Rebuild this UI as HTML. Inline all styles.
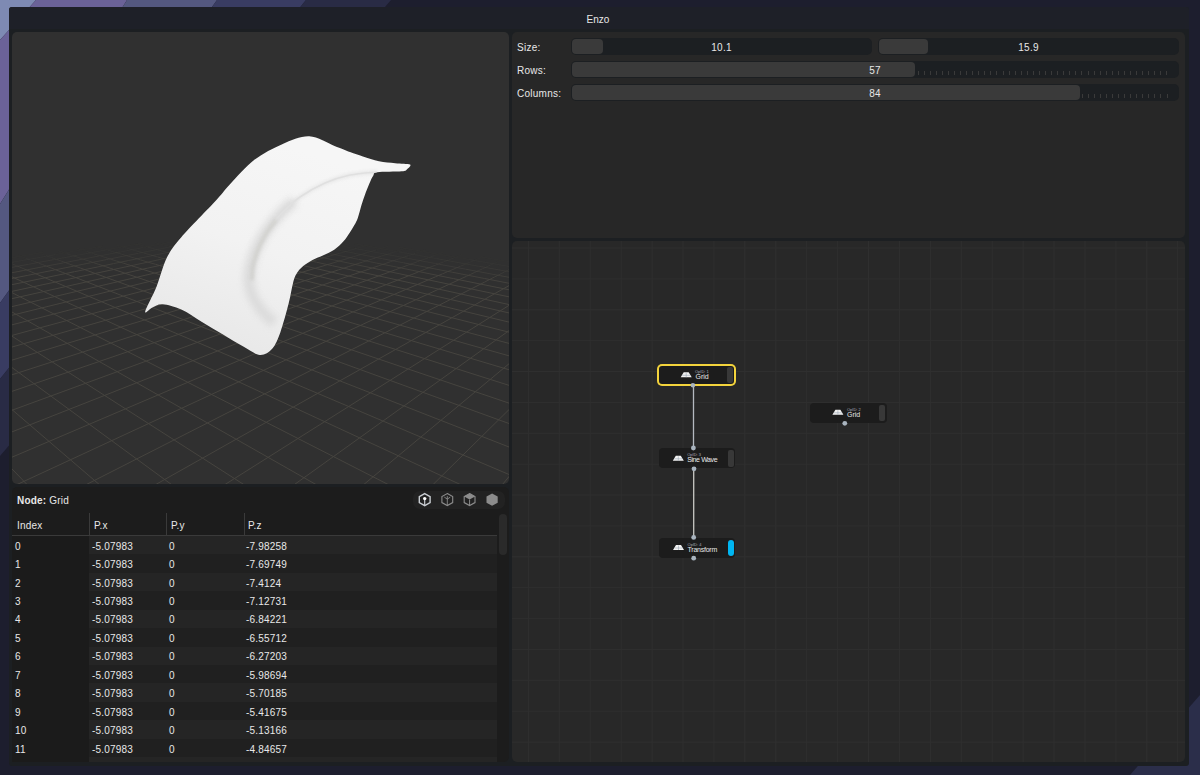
<!DOCTYPE html>
<html><head><meta charset="utf-8"><style>
*{margin:0;padding:0;box-sizing:border-box}
html,body{width:1200px;height:775px;overflow:hidden;background:#1c1d2d;font-family:"Liberation Sans",sans-serif;color:#e6e6e6}
.abs{position:absolute}
#bg{position:absolute;left:0;top:0;width:1200px;height:775px}
#win{position:absolute;left:9px;top:7px;width:1180px;height:759px;background:#1c1f22;border-radius:3px}
#tbar{position:absolute;left:9px;top:7px;width:1180px;height:21.5px;background:#1e2028;border-radius:3px 3px 0 0}
#title{position:absolute;left:0;top:14px;width:1196px;text-align:center;font-size:10px;color:#e8e8e8}
.panel{position:absolute;border-radius:5px;overflow:hidden}
#vp{left:12px;top:32px;width:497px;height:452px;background:#303030}
#tbl{left:12px;top:487px;width:497px;height:275px;background:#1c1c1c}
#par{left:512px;top:32px;width:673px;height:206px;background:#272727}
#ned{left:512px;top:241px;width:673px;height:521px;background:#282828}
.t{position:absolute;font-size:10px;line-height:12px;color:#e8e8e8;white-space:nowrap;letter-spacing:0.2px}
.row{position:absolute;left:89px;width:408px;height:18.47px}
.lbl{position:absolute;font-size:10px;line-height:12px;color:#e8e8e8;letter-spacing:0.25px}
.inp{position:absolute;height:17px;background:#1c1f22;border-radius:5px}
.thumb{position:absolute;left:1px;top:1px;height:15px;background:#3a3a3a;border-radius:4px}
.val{position:absolute;left:0;top:4px;width:100%;text-align:center;font-size:10px;line-height:12px;color:#e8e8e8;letter-spacing:0.3px}
.tick{position:absolute;width:1px;height:4px;background:#3a3a3a}
.node{position:absolute;background:#1c1c1c;border-radius:4px}
.flag{position:absolute;border-radius:2px;background:#383838}
.dot{position:absolute;width:5px;height:5px;border-radius:50%;background:#a9b0b8}
.op{position:absolute;font-size:4px;line-height:5px;color:#aab}
.nm{position:absolute;font-size:7px;line-height:8px;color:#e8e8e8;white-space:nowrap}
</style></head><body>
<svg id="bg" viewBox="0 0 1200 775">
<defs><linearGradient id="g1" x1="0" y1="0" x2="1" y2="0.6">
<stop offset="0" stop-color="#7b86b0"/><stop offset="0.08" stop-color="#6c6399"/><stop offset="0.2" stop-color="#575a84"/><stop offset="0.36" stop-color="#3b3e63"/><stop offset="0.55" stop-color="#23253a"/><stop offset="1" stop-color="#1c1d2d"/></linearGradient></defs>
<rect width="1200" height="775" fill="#1d1e2e"/>
<polygon points="0,0 36,0 0,40" fill="#7e8ab3"/>
<polygon points="36,0 127,0 0,204 0,40" fill="#6b6298"/>
<polygon points="127,0 217,0 0,303 0,204" fill="#545880"/>
<polygon points="217,0 306,0 0,379 0,303" fill="#393c62"/>
<polygon points="306,0 391,0 0,456 0,379" fill="#292b45"/>
<polygon points="1130,775 1200,775 1200,695" fill="#2b2e4a"/>
</svg>
<div id="win"></div><div id="tbar"></div>
<div id="title">Enzo</div>

<div id="vp" class="panel">
<svg width="497" height="452" viewBox="12 32 497 452" style="position:absolute;left:0;top:0">
<defs><linearGradient id="fade" x1="0" y1="32" x2="0" y2="484" gradientUnits="userSpaceOnUse">
<stop offset="0.43" stop-color="#fff" stop-opacity="0"/><stop offset="0.56" stop-color="#fff" stop-opacity="0.8"/><stop offset="0.75" stop-color="#fff" stop-opacity="1"/></linearGradient>
<mask id="fm"><rect x="0" y="0" width="1200" height="775" fill="url(#fade)"/></mask>
<linearGradient id="clg" x1="300" y1="150" x2="230" y2="350" gradientUnits="userSpaceOnUse"><stop offset="0" stop-color="#f6f6f6"/><stop offset="0.5" stop-color="#f2f2f2"/><stop offset="1" stop-color="#e8e8e8"/></linearGradient><clipPath id="cc"><path d="M309.2 136.3C317.9 136.6 327.7 143.3 334.5 145.9C341.3 148.5 345.3 150.2 350.0 152.0C354.7 153.8 358.1 154.9 362.9 156.5C367.7 158.1 373.6 160.2 379.0 161.3C384.4 162.4 390.0 162.6 395.2 163.2C400.4 163.8 408.1 163.6 410.0 164.6C411.9 165.6 408.2 168.3 406.8 169.4C405.4 170.5 406.6 170.8 401.6 171.3C396.7 171.8 381.8 171.6 377.1 172.3C372.4 173.1 374.5 173.9 373.2 175.8C371.9 177.7 370.8 180.3 369.4 183.5C368.0 186.7 366.1 191.6 364.8 195.2C363.5 198.8 362.7 201.2 361.5 205.0C360.3 208.8 359.0 214.6 357.8 217.9C356.6 221.2 355.8 222.5 354.4 225.0C353.0 227.5 351.5 230.0 349.7 232.7C347.9 235.4 346.1 238.5 343.5 241.3C340.9 244.2 337.6 247.5 334.2 249.8C330.8 252.1 327.0 253.5 323.4 255.2C319.8 256.9 315.9 258.1 312.5 259.9C309.1 261.7 305.8 263.8 303.2 266.0C300.6 268.2 298.7 270.3 297.0 273.0C295.3 275.7 294.6 277.2 293.2 282.3C291.8 287.4 290.8 295.0 288.7 303.3C286.6 311.6 283.1 324.6 280.4 332.2C277.6 339.8 275.6 344.9 272.2 348.7C268.8 352.5 264.6 355.2 259.8 354.9C255.0 354.5 249.5 350.1 243.3 346.6C237.1 343.2 229.5 338.3 222.6 334.2C215.7 330.1 208.9 326.0 202.0 321.9C195.1 317.8 187.9 312.4 181.3 309.5C174.8 306.6 167.5 304.7 162.7 304.3C157.9 303.9 155.3 306.2 152.4 307.4C149.5 308.6 144.5 314.9 145.2 311.5C145.9 308.1 152.9 295.6 156.5 286.7C160.1 277.8 162.7 266.1 166.8 257.8C170.9 249.6 173.0 246.8 181.3 237.2C189.6 227.6 208.3 208.8 216.4 200.0C224.5 191.2 223.7 190.9 230.0 184.2C236.3 177.5 245.7 166.5 254.4 159.8C263.1 153.1 273.1 148.1 282.2 144.2C291.3 140.3 300.5 136.0 309.2 136.3Z"/></clipPath>
<filter id="bl" x="-50%" y="-50%" width="200%" height="200%"><feGaussianBlur stdDeviation="4"/></filter><filter id="bl2" x="-50%" y="-50%" width="200%" height="200%"><feGaussianBlur stdDeviation="3"/></filter><filter id="bl3" x="-50%" y="-50%" width="200%" height="200%"><feGaussianBlur stdDeviation="1.5"/></filter>
</defs>
<g stroke="#46443f" stroke-width="1" fill="none"><path d="M-20.2 263.3L43.7 252.2M55.0 254.7L102.7 246.1M105.7 250.0L141.7 243.3M143.3 247.5L173.6 241.7M174.9 246.0L201.3 240.7M202.7 245.2L226.6 240.2M228.1 244.8L249.4 240.2M251.8 244.8L271.4 240.3M274.2 245.0L292.0 240.8M295.7 245.5L312.1 241.5M316.3 246.3L331.5 242.4M336.5 247.3L350.5 243.5M356.3 248.5L369.2 244.8M376.2 249.9L388.0 246.3M395.5 251.5L406.4 248.0M415.1 253.3L425.1 249.9M434.7 255.4L444.0 252.0M454.6 257.6L462.7 254.4M474.6 260.2L481.9 257.1M494.9 263.0L501.7 259.9M515.9 266.2L521.8 263.1M537.3 269.7L540.0 268.1M-20.1 262.0L-16.4 263.7M-1.2 258.2L4.9 260.8M18.8 255.4L25.7 258.1M38.5 252.8L46.2 255.6M58.0 250.6L66.6 253.5M77.2 248.5L87.0 251.6M96.4 246.7L107.1 249.9M115.6 245.1L127.6 248.5M135.0 243.7L148.0 247.2M154.6 242.5L169.1 246.2M174.8 241.6L190.9 245.5M195.5 240.8L213.3 244.9M216.9 240.3L236.9 244.7M239.7 240.2L262.2 244.9M264.0 240.3L289.2 245.4M290.1 240.8L319.6 246.5M319.8 241.9L354.5 248.4M354.3 243.8L398.8 251.8M398.5 247.2L469.1 259.5M480.1 256.7L539.6 266.8" stroke-opacity="0.10"/><path d="M14.9 261.8L55.0 254.7M77.7 255.2L105.7 250.0M120.6 251.9L143.3 247.5M155.5 249.9L174.9 246.0M185.2 248.8L202.7 245.2M212.7 248.1L228.1 244.8M237.8 247.9L251.8 244.8M261.3 248.1L274.2 245.0M283.6 248.5L295.7 245.5M305.3 249.2L316.3 246.3M326.6 250.0L336.5 247.3M347.1 251.2L356.3 248.5M367.6 252.5L376.2 249.9M387.9 254.0L395.5 251.5M408.1 255.7L415.1 253.3M428.2 257.8L434.7 255.4M448.7 260.0L454.6 257.6M469.2 262.5L474.6 260.2M490.0 265.3L494.9 263.0M511.4 268.4L515.9 266.2M533.5 271.8L537.3 269.7M-16.4 263.7L-12.7 265.5M4.9 260.8L9.1 262.6M25.7 258.1L30.6 260.0M46.2 255.6L51.9 257.7M66.6 253.5L72.8 255.6M87.0 251.6L93.7 253.8M107.1 249.9L114.7 252.2M127.6 248.5L136.2 250.9M148.0 247.2L157.6 249.8M169.1 246.2L179.8 248.9M190.9 245.5L202.8 248.3M213.3 244.9L226.3 247.9M236.9 244.7L251.8 248.0M262.2 244.9L278.6 248.3M289.2 245.4L308.3 249.2M319.6 246.5L341.8 250.8M354.5 248.4L382.4 253.6M398.8 251.8L437.0 258.7M469.1 259.5L540.1 271.9" stroke-opacity="0.20"/><path d="M-19.7 268.0L14.9 261.8M53.0 259.8L77.7 255.2M100.6 255.7L120.6 251.9M138.4 253.3L155.5 249.9M170.6 251.8L185.2 248.8M199.2 251.0L212.7 248.1M225.4 250.7L237.8 247.9M250.2 250.7L261.3 248.1M273.7 250.9L283.6 248.5M296.2 251.5L305.3 249.2M317.8 252.4L326.6 250.0M339.3 253.4L347.1 251.2M360.1 254.7L367.6 252.5M381.1 256.2L387.9 254.0M401.8 257.9L408.1 255.7M422.4 259.9L428.2 257.8M443.4 262.0L448.7 260.0M464.5 264.5L469.2 262.5M486.0 267.2L490.0 265.3M507.9 270.2L511.4 268.4M530.2 273.7L533.5 271.8M-12.7 265.5L-9.3 267.0M9.1 262.6L12.9 264.2M30.6 260.0L34.8 261.6M51.9 257.7L56.6 259.4M72.8 255.6L78.3 257.5M93.7 253.8L99.8 255.7M114.7 252.2L121.6 254.2M136.2 250.9L143.7 253.0M157.6 249.8L166.2 252.0M179.8 248.9L189.0 251.2M202.8 248.3L213.2 250.8M226.3 247.9L238.0 250.6M251.8 248.0L264.5 250.8M278.6 248.3L293.7 251.5M308.3 249.2L325.7 252.8M341.8 250.8L362.4 254.8M382.4 253.6L408.7 258.5M437.0 258.7L479.5 266.4" stroke-opacity="0.30"/><path d="M28.4 264.3L53.0 259.8M81.9 259.3L100.6 255.7M122.6 256.4L138.4 253.3M156.2 254.8L170.6 251.8M186.6 253.7L199.2 251.0M214.2 253.2L225.4 250.7M239.9 253.1L250.2 250.7M263.9 253.4L273.7 250.9M287.2 253.8L296.2 251.5M309.8 254.6L317.8 252.4M332.0 255.5L339.3 253.4M353.5 256.7L360.1 254.7M375.0 258.1L381.1 256.2M396.3 259.8L401.8 257.9M417.4 261.7L422.4 259.9M438.6 263.9L443.4 262.0M460.2 266.3L464.5 264.5M482.2 269.0L486.0 267.2M504.5 271.9L507.9 270.2M527.2 275.3L530.2 273.7M-9.3 267.0L-6.4 268.3M12.9 264.2L16.5 265.7M34.8 261.6L38.9 263.2M56.6 259.4L61.1 261.0M78.3 257.5L83.3 259.2M99.8 255.7L105.6 257.6M121.6 254.2L128.1 256.2M143.7 253.0L150.8 255.0M166.2 252.0L173.9 254.1M189.0 251.2L197.9 253.5M213.2 250.8L222.8 253.2M238.0 250.6L248.9 253.1M264.5 250.8L277.2 253.6M293.7 251.5L307.6 254.5M325.7 252.8L342.0 256.1M362.4 254.8L382.7 258.8M408.7 258.5L435.8 263.6M479.5 266.4L539.7 277.2" stroke-opacity="0.40"/><path d="M2.9 269.0L28.4 264.3M63.3 262.9L81.9 259.3M106.6 259.6L122.6 256.4M142.7 257.6L156.2 254.8M174.4 256.4L186.6 253.7M203.1 255.7L214.2 253.2M229.7 255.5L239.9 253.1M254.5 255.7L263.9 253.4M278.6 256.1L287.2 253.8M302.0 256.7L309.8 254.6M324.5 257.6L332.0 255.5M347.0 258.7L353.5 256.7M368.7 260.1L375.0 258.1M390.6 261.7L396.3 259.8M412.3 263.6L417.4 261.7M434.0 265.7L438.6 263.9M456.0 268.1L460.2 266.3M478.5 270.6L482.2 269.0M501.0 273.7L504.5 271.9M524.5 276.9L527.2 275.3M-6.4 268.3L-3.3 269.8M16.5 265.7L19.8 267.1M38.9 263.2L42.7 264.7M61.1 261.0L65.7 262.7M83.3 259.2L88.5 260.9M105.6 257.6L111.3 259.4M128.1 256.2L134.4 258.0M150.8 255.0L157.7 257.0M173.9 254.1L181.9 256.2M197.9 253.5L206.6 255.7M222.8 253.2L232.3 255.5M248.9 253.1L259.8 255.6M277.2 253.6L289.6 256.3M307.6 254.5L321.7 257.4M342.0 256.1L358.7 259.4M382.7 258.8L403.6 262.8M435.8 263.6L465.7 269.2" stroke-opacity="0.50"/><path d="M-20.0 273.3L2.9 269.0M43.7 266.6L63.3 262.9M90.4 262.8L106.6 259.6M128.7 260.5L142.7 257.6M161.7 259.1L174.4 256.4M191.5 258.3L203.1 255.7M219.1 257.9L229.7 255.5M245.3 257.9L254.5 255.7M270.2 258.2L278.6 256.1M293.9 258.9L302.0 256.7M317.1 259.7L324.5 257.6M340.2 260.7L347.0 258.7M362.6 262.1L368.7 260.1M384.7 263.7L390.6 261.7M407.0 265.5L412.3 263.6M429.6 267.5L434.0 265.7M451.8 269.9L456.0 268.1M474.5 272.5L478.5 270.6M497.8 275.4L501.0 273.7M521.4 278.6L524.5 276.9M-3.3 269.8L-0.3 271.2M19.8 267.1L23.3 268.6M42.7 264.7L46.9 266.3M65.7 262.7L70.1 264.3M88.5 260.9L93.4 262.6M111.3 259.4L116.8 261.1M134.4 258.0L140.8 260.0M157.7 257.0L164.9 259.0M181.9 256.2L189.7 258.3M206.6 255.7L215.6 258.0M232.3 255.5L242.6 257.9M259.8 255.6L271.1 258.2M289.6 256.3L302.5 259.2M321.7 257.4L337.0 260.6M358.7 259.4L376.7 263.1M403.6 262.8L426.4 267.3M465.7 269.2L500.9 275.8" stroke-opacity="0.60"/><path d="M23.1 270.6L43.7 266.6M73.4 266.2L90.4 262.8M113.5 263.6L128.7 260.5M148.4 262.0L161.7 259.1M179.5 261.0L191.5 258.3M208.2 260.5L219.1 257.9M235.3 260.4L245.3 257.9M261.0 260.6L270.2 258.2M285.6 261.1L293.9 258.9M309.5 261.9L317.1 259.7M332.9 263.0L340.2 260.7M356.0 264.2L362.6 262.1M378.7 265.8L384.7 263.7M401.6 267.5L407.0 265.5M424.4 269.5L429.6 267.5M447.5 271.7L451.8 269.9M470.7 274.3L474.5 272.5M494.1 277.2L497.8 275.4M518.2 280.4L521.4 278.6M-0.3 271.2L2.8 272.6M23.3 268.6L27.1 270.2M46.9 266.3L51.2 268.0M70.1 264.3L75.0 266.1M93.4 262.6L98.8 264.4M116.8 261.1L123.2 263.1M140.8 260.0L147.5 262.0M164.9 259.0L172.6 261.2M189.7 258.3L198.2 260.6M215.6 258.0L225.4 260.4M242.6 257.9L253.4 260.5M271.1 258.2L283.3 261.0M302.5 259.2L316.5 262.2M337.0 260.6L353.0 264.0M376.7 263.1L396.4 267.0M426.4 267.3L452.1 272.2M500.9 275.8L540.2 283.1" stroke-opacity="0.70"/><path d="M-0.9 275.2L23.1 270.6M54.3 270.0L73.4 266.2M97.0 267.1L113.5 263.6M133.5 265.2L148.4 262.0M165.9 264.1L179.5 261.0M195.8 263.4L208.2 260.5M224.0 263.2L235.3 260.4M250.7 263.3L261.0 260.6M276.1 263.7L285.6 261.1M300.8 264.4L309.5 261.9M325.0 265.4L332.9 263.0M348.7 266.6L356.0 264.2M372.1 268.0L378.7 265.8M395.3 269.8L401.6 267.5M418.7 271.8L424.4 269.5M442.4 273.9L447.5 271.7M466.2 276.4L470.7 274.3M490.1 279.2L494.1 277.2M-19.9 276.4L-18.6 277.0M514.8 282.3L518.2 280.4M2.8 272.6L6.5 274.3M539.9 285.9L540.1 285.7M27.1 270.2L31.3 271.9M51.2 268.0L55.9 269.9M75.0 266.1L80.6 268.1M98.8 264.4L105.4 266.6M123.2 263.1L130.1 265.3M147.5 262.0L155.5 264.3M172.6 261.2L181.4 263.6M198.2 260.6L208.3 263.3M225.4 260.4L236.4 263.2M253.4 260.5L265.9 263.5M283.3 261.0L297.5 264.3M316.5 262.2L332.7 265.8M353.0 264.0L372.1 268.0M396.4 267.0L420.3 271.9M452.1 272.2L484.5 278.5" stroke-opacity="0.80"/><path d="M-20.2 278.9L-0.9 275.2M27.9 275.3L54.3 270.0M74.5 271.7L97.0 267.1M113.1 269.6L133.5 265.2M147.8 268.1L165.9 264.1M179.1 267.3L195.8 263.4M208.6 266.9L224.0 263.2M236.5 266.9L250.7 263.3M263.0 267.3L276.1 263.7M288.7 267.9L300.8 264.4M313.8 268.7L325.0 265.4M338.4 269.9L348.7 266.6M363.0 271.2L372.1 268.0M387.0 272.9L395.3 269.8M411.1 274.8L418.7 271.8M435.5 276.8L442.4 273.9M459.9 279.3L466.2 276.4M484.6 282.1L490.1 279.2M-18.6 277.0L-14.2 279.3M510.1 285.0L514.8 282.3M6.5 274.3L11.7 276.7M535.7 288.5L539.9 285.9M31.3 271.9L37.1 274.4M55.9 269.9L62.8 272.5M80.6 268.1L88.1 270.9M105.4 266.6L113.7 269.4M130.1 265.3L139.9 268.4M155.5 264.3L166.2 267.5M181.4 263.6L193.5 267.0M208.3 263.3L221.9 266.9M236.4 263.2L251.6 267.1M265.9 263.5L283.0 267.7M297.5 264.3L317.2 268.8M332.7 265.8L355.5 270.8M372.1 268.0L399.1 273.7M420.3 271.9L453.4 278.6M484.5 278.5L534.9 288.3" stroke-opacity="0.90"/><path d="M-19.7 284.8L27.9 275.3M-20.0 291.3L74.5 271.7M-20.3 298.3L113.1 269.6M-19.7 305.8L147.8 268.1M-20.0 314.1L179.1 267.3M-20.3 323.2L208.6 266.9M-19.7 333.0L236.5 266.9M-20.0 344.1L263.0 267.3M-20.4 356.3L288.7 267.9M-19.7 369.7L313.8 268.7M-20.1 385.1L338.4 269.9M-20.6 402.5L363.0 271.2M-20.0 435.8L41.8 499.8M-19.6 421.8L387.0 272.9M-19.8 382.3L116.8 499.6M-20.1 444.5L411.1 274.8M-20.0 344.1L192.9 500.2M-20.7 471.1L435.5 276.8M-19.9 315.8L268.0 500.0M-15.9 499.8L459.9 279.3M-20.1 293.8L342.9 499.8M56.7 499.6L484.6 282.1M-14.2 279.3L417.8 499.6M127.7 500.3L510.1 285.0M11.7 276.7L494.4 500.3M200.3 500.1L535.7 288.5M37.1 274.4L539.7 487.5M272.9 500.0L540.0 308.4M62.8 272.5L540.4 459.3M345.4 499.8L540.1 337.9M88.1 270.9L539.5 434.6M417.8 499.6L540.0 379.0M113.7 269.4L540.2 413.7M489.5 500.3L540.2 438.6M139.9 268.4L539.4 395.0M166.2 267.5L540.0 379.0M193.5 267.0L540.5 364.7M221.9 266.9L539.8 351.6M251.6 267.1L540.3 340.1M283.0 267.7L539.7 329.5M317.2 268.8L540.1 320.1M355.5 270.8L539.6 311.3M399.1 273.7L540.0 303.4M453.4 278.6L540.3 296.1M534.9 288.3L539.8 289.3" stroke-opacity="1.00"/></g>
<path d="M309.2 136.3C317.9 136.6 327.7 143.3 334.5 145.9C341.3 148.5 345.3 150.2 350.0 152.0C354.7 153.8 358.1 154.9 362.9 156.5C367.7 158.1 373.6 160.2 379.0 161.3C384.4 162.4 390.0 162.6 395.2 163.2C400.4 163.8 408.1 163.6 410.0 164.6C411.9 165.6 408.2 168.3 406.8 169.4C405.4 170.5 406.6 170.8 401.6 171.3C396.7 171.8 381.8 171.6 377.1 172.3C372.4 173.1 374.5 173.9 373.2 175.8C371.9 177.7 370.8 180.3 369.4 183.5C368.0 186.7 366.1 191.6 364.8 195.2C363.5 198.8 362.7 201.2 361.5 205.0C360.3 208.8 359.0 214.6 357.8 217.9C356.6 221.2 355.8 222.5 354.4 225.0C353.0 227.5 351.5 230.0 349.7 232.7C347.9 235.4 346.1 238.5 343.5 241.3C340.9 244.2 337.6 247.5 334.2 249.8C330.8 252.1 327.0 253.5 323.4 255.2C319.8 256.9 315.9 258.1 312.5 259.9C309.1 261.7 305.8 263.8 303.2 266.0C300.6 268.2 298.7 270.3 297.0 273.0C295.3 275.7 294.6 277.2 293.2 282.3C291.8 287.4 290.8 295.0 288.7 303.3C286.6 311.6 283.1 324.6 280.4 332.2C277.6 339.8 275.6 344.9 272.2 348.7C268.8 352.5 264.6 355.2 259.8 354.9C255.0 354.5 249.5 350.1 243.3 346.6C237.1 343.2 229.5 338.3 222.6 334.2C215.7 330.1 208.9 326.0 202.0 321.9C195.1 317.8 187.9 312.4 181.3 309.5C174.8 306.6 167.5 304.7 162.7 304.3C157.9 303.9 155.3 306.2 152.4 307.4C149.5 308.6 144.5 314.9 145.2 311.5C145.9 308.1 152.9 295.6 156.5 286.7C160.1 277.8 162.7 266.1 166.8 257.8C170.9 249.6 173.0 246.8 181.3 237.2C189.6 227.6 208.3 208.8 216.4 200.0C224.5 191.2 223.7 190.9 230.0 184.2C236.3 177.5 245.7 166.5 254.4 159.8C263.1 153.1 273.1 148.1 282.2 144.2C291.3 140.3 300.5 136.0 309.2 136.3Z" fill="url(#clg)"/>
<g clip-path="url(#cc)"><path d="M377.0 172.0C372.5 172.5 358.7 173.2 350.0 175.0C341.3 176.8 333.3 179.3 325.0 183.0C316.7 186.7 307.2 192.0 300.0 197.0C292.8 202.0 287.0 208.0 282.0 213.0C277.0 218.0 272.0 224.7 270.0 227.0" stroke="#e0e0e0" stroke-width="4" fill="none" filter="url(#bl3)" opacity="0.6"/><path d="M296.0 200.0C293.7 202.2 286.7 208.0 282.0 213.0C277.3 218.0 272.0 224.2 268.0 230.0C264.0 235.8 260.7 242.0 258.0 248.0C255.3 254.0 253.2 260.3 252.0 266.0C250.8 271.7 250.5 277.0 251.0 282.0C251.5 287.0 252.8 291.3 255.0 296.0C257.2 300.7 260.5 305.7 264.0 310.0C267.5 314.3 274.0 320.0 276.0 322.0" stroke="#d9d9d9" stroke-width="11" fill="none" filter="url(#bl2)" opacity="0.85" transform="translate(-2 1)"/>
<path d="M377.0 172.0C372.5 172.5 358.7 173.2 350.0 175.0C341.3 176.8 333.3 179.3 325.0 183.0C316.7 186.7 307.2 192.0 300.0 197.0C292.8 202.0 287.0 208.0 282.0 213.0C277.0 218.0 272.0 224.7 270.0 227.0" stroke="#e0e0e0" stroke-width="1.6" fill="none"/>
<path d="M276.0 220.0C274.3 222.3 269.0 229.0 266.0 234.0C263.0 239.0 260.2 244.7 258.0 250.0C255.8 255.3 254.0 261.0 253.0 266.0C252.0 271.0 252.2 277.7 252.0 280.0" stroke="#cfcfcb" stroke-width="4" fill="none" filter="url(#bl3)" opacity="0.8"/></g>
</svg>
</div>

<div id="tbl" class="panel"></div>
<div class="t" style="left:17px;top:495px;font-size:10px"><b>Node:</b> Grid</div>
<div class="abs" style="left:413px;top:491px;width:92px;height:18px;border-radius:7px;background:#222222"></div>
<svg class="abs" style="left:0;top:0" width="1200" height="775" viewBox="0 0 1200 775">
<g transform="translate(424.7 499.6)">
<polygon points="0,-6 5.4,-3 5.4,3 0,6 -5.4,3 -5.4,-3" fill="none" stroke="#c9cdd2" stroke-width="1.4"/>
<path d="M0 -1V6" stroke="#c9cdd2" stroke-width="1.2"/><circle cx="0" cy="-1" r="1.7" fill="#ffffff"/>
</g>
<g transform="translate(447.3 499.6)">
<polygon points="0,-6 5.4,-3 5.4,3 0,6 -5.4,3 -5.4,-3" fill="none" stroke="#8c8c8c" stroke-width="1.1"/>
<path d="M0 -0.5V6M0 -0.5L-3 -2.5M0 -0.5L3 -2.5M0 -3.5V-0.5" stroke="#8c8c8c" stroke-width="0.9"/>
</g>
<g transform="translate(469.6 499.6)">
<polygon points="0,-6 5.4,-3 0,0 -5.4,-3" fill="#8c8c8c"/>
<polygon points="0,-6 5.4,-3 5.4,3 0,6 -5.4,3 -5.4,-3" fill="none" stroke="#8c8c8c" stroke-width="1.1"/>
<path d="M0 0V6" stroke="#8c8c8c" stroke-width="1"/>
</g>
<g transform="translate(492.1 499.6)">
<polygon points="0,-6.2 5.6,-3.1 5.6,3.1 0,6.2 -5.6,3.1 -5.6,-3.1" fill="#8c8c8c"/>
</g>
</svg>

<div class="abs" style="left:12px;top:535px;width:77px;height:227px;background:#1b1b1b"></div>
<div class="row" style="top:757.2px;height:4.6px;background:#252525"></div><div class="row" style="top:535.80px;background:#252525"></div><div class="t" style="left:15px;top:540.60px">0</div><div class="t" style="left:92px;top:540.60px">-5.07983</div><div class="t" style="left:169px;top:540.60px">0</div><div class="t" style="left:246px;top:540.60px">-7.98258</div><div class="row" style="top:554.25px;background:#202020"></div><div class="t" style="left:15px;top:559.05px">1</div><div class="t" style="left:92px;top:559.05px">-5.07983</div><div class="t" style="left:169px;top:559.05px">0</div><div class="t" style="left:246px;top:559.05px">-7.69749</div><div class="row" style="top:572.70px;background:#252525"></div><div class="t" style="left:15px;top:577.50px">2</div><div class="t" style="left:92px;top:577.50px">-5.07983</div><div class="t" style="left:169px;top:577.50px">0</div><div class="t" style="left:246px;top:577.50px">-7.4124</div><div class="row" style="top:591.15px;background:#202020"></div><div class="t" style="left:15px;top:595.95px">3</div><div class="t" style="left:92px;top:595.95px">-5.07983</div><div class="t" style="left:169px;top:595.95px">0</div><div class="t" style="left:246px;top:595.95px">-7.12731</div><div class="row" style="top:609.60px;background:#252525"></div><div class="t" style="left:15px;top:614.40px">4</div><div class="t" style="left:92px;top:614.40px">-5.07983</div><div class="t" style="left:169px;top:614.40px">0</div><div class="t" style="left:246px;top:614.40px">-6.84221</div><div class="row" style="top:628.05px;background:#202020"></div><div class="t" style="left:15px;top:632.85px">5</div><div class="t" style="left:92px;top:632.85px">-5.07983</div><div class="t" style="left:169px;top:632.85px">0</div><div class="t" style="left:246px;top:632.85px">-6.55712</div><div class="row" style="top:646.50px;background:#252525"></div><div class="t" style="left:15px;top:651.30px">6</div><div class="t" style="left:92px;top:651.30px">-5.07983</div><div class="t" style="left:169px;top:651.30px">0</div><div class="t" style="left:246px;top:651.30px">-6.27203</div><div class="row" style="top:664.95px;background:#202020"></div><div class="t" style="left:15px;top:669.75px">7</div><div class="t" style="left:92px;top:669.75px">-5.07983</div><div class="t" style="left:169px;top:669.75px">0</div><div class="t" style="left:246px;top:669.75px">-5.98694</div><div class="row" style="top:683.40px;background:#252525"></div><div class="t" style="left:15px;top:688.20px">8</div><div class="t" style="left:92px;top:688.20px">-5.07983</div><div class="t" style="left:169px;top:688.20px">0</div><div class="t" style="left:246px;top:688.20px">-5.70185</div><div class="row" style="top:701.85px;background:#202020"></div><div class="t" style="left:15px;top:706.65px">9</div><div class="t" style="left:92px;top:706.65px">-5.07983</div><div class="t" style="left:169px;top:706.65px">0</div><div class="t" style="left:246px;top:706.65px">-5.41675</div><div class="row" style="top:720.30px;background:#252525"></div><div class="t" style="left:15px;top:725.10px">10</div><div class="t" style="left:92px;top:725.10px">-5.07983</div><div class="t" style="left:169px;top:725.10px">0</div><div class="t" style="left:246px;top:725.10px">-5.13166</div><div class="row" style="top:738.75px;background:#202020"></div><div class="t" style="left:15px;top:743.55px">11</div><div class="t" style="left:92px;top:743.55px">-5.07983</div><div class="t" style="left:169px;top:743.55px">0</div><div class="t" style="left:246px;top:743.55px">-4.84657</div>
<div class="abs" style="left:12px;top:534.5px;width:485px;height:1px;background:#3a3a3a"></div>
<div class="abs" style="left:89px;top:513px;width:1px;height:22px;background:#3a3a3a"></div>
<div class="abs" style="left:166px;top:513px;width:1px;height:22px;background:#3a3a3a"></div>
<div class="abs" style="left:244px;top:513px;width:1px;height:22px;background:#3a3a3a"></div>
<div class="t" style="left:17px;top:520.2px">Index</div>
<div class="t" style="left:94px;top:520.2px">P.x</div>
<div class="t" style="left:171px;top:520.2px">P.y</div>
<div class="t" style="left:248px;top:520.2px">P.z</div>
<div class="abs" style="left:499px;top:514px;width:8px;height:41px;border-radius:4px;background:#2a2a2a"></div>

<div id="par" class="panel"></div>
<div class="lbl" style="left:517px;top:42px">Size:</div>
<div class="lbl" style="left:517px;top:65px">Rows:</div>
<div class="lbl" style="left:517px;top:88px">Columns:</div>
<div class="inp" style="left:571px;top:38px;width:301px"><div class="thumb" style="width:31px"></div><div class="val">10.1</div></div>
<div class="inp" style="left:878px;top:38px;width:301px"><div class="thumb" style="width:49px"></div><div class="val">15.9</div></div>
<div class="inp" style="left:571px;top:61px;width:608px"><div class="thumb" style="width:343px"></div><div class="val">57</div></div>
<div class="tick" style="left:917.5px;top:71px"></div><div class="tick" style="left:923.6px;top:71px"></div><div class="tick" style="left:929.6px;top:71px"></div><div class="tick" style="left:935.7px;top:71px"></div><div class="tick" style="left:941.8px;top:71px"></div><div class="tick" style="left:947.9px;top:71px"></div><div class="tick" style="left:953.9px;top:71px"></div><div class="tick" style="left:960.0px;top:71px"></div><div class="tick" style="left:966.1px;top:71px"></div><div class="tick" style="left:972.1px;top:71px"></div><div class="tick" style="left:978.2px;top:71px"></div><div class="tick" style="left:984.3px;top:71px"></div><div class="tick" style="left:990.3px;top:71px"></div><div class="tick" style="left:996.4px;top:71px"></div><div class="tick" style="left:1002.5px;top:71px"></div><div class="tick" style="left:1008.6px;top:71px"></div><div class="tick" style="left:1014.6px;top:71px"></div><div class="tick" style="left:1020.7px;top:71px"></div><div class="tick" style="left:1026.8px;top:71px"></div><div class="tick" style="left:1032.8px;top:71px"></div><div class="tick" style="left:1038.9px;top:71px"></div><div class="tick" style="left:1045.0px;top:71px"></div><div class="tick" style="left:1051.0px;top:71px"></div><div class="tick" style="left:1057.1px;top:71px"></div><div class="tick" style="left:1063.2px;top:71px"></div><div class="tick" style="left:1069.3px;top:71px"></div><div class="tick" style="left:1075.3px;top:71px"></div><div class="tick" style="left:1081.4px;top:71px"></div><div class="tick" style="left:1087.5px;top:71px"></div><div class="tick" style="left:1093.5px;top:71px"></div><div class="tick" style="left:1099.6px;top:71px"></div><div class="tick" style="left:1105.7px;top:71px"></div><div class="tick" style="left:1111.7px;top:71px"></div><div class="tick" style="left:1117.8px;top:71px"></div><div class="tick" style="left:1123.9px;top:71px"></div><div class="tick" style="left:1129.9px;top:71px"></div><div class="tick" style="left:1136.0px;top:71px"></div><div class="tick" style="left:1142.1px;top:71px"></div><div class="tick" style="left:1148.2px;top:71px"></div><div class="tick" style="left:1154.2px;top:71px"></div><div class="tick" style="left:1160.3px;top:71px"></div><div class="tick" style="left:1166.4px;top:71px"></div>
<div class="inp" style="left:571px;top:84px;width:608px"><div class="thumb" style="width:508px"></div><div class="val">84</div></div>
<div class="tick" style="left:1081.5px;top:94px"></div><div class="tick" style="left:1087.6px;top:94px"></div><div class="tick" style="left:1093.6px;top:94px"></div><div class="tick" style="left:1099.7px;top:94px"></div><div class="tick" style="left:1105.8px;top:94px"></div><div class="tick" style="left:1111.8px;top:94px"></div><div class="tick" style="left:1117.9px;top:94px"></div><div class="tick" style="left:1124.0px;top:94px"></div><div class="tick" style="left:1130.1px;top:94px"></div><div class="tick" style="left:1136.1px;top:94px"></div><div class="tick" style="left:1142.2px;top:94px"></div><div class="tick" style="left:1148.3px;top:94px"></div><div class="tick" style="left:1154.3px;top:94px"></div><div class="tick" style="left:1160.4px;top:94px"></div><div class="tick" style="left:1166.5px;top:94px"></div>

<div id="ned" class="panel"></div>
<svg class="abs" style="left:0;top:0" width="1200" height="775" viewBox="0 0 1200 775">
<clipPath id="nc"><rect x="512" y="241" width="673" height="521" rx="5"/></clipPath>
<path d="M528.4 241V762M559.3 241V762M590.2 241V762M621.2 241V762M652.1 241V762M683.0 241V762M713.9 241V762M744.8 241V762M775.8 241V762M806.7 241V762M837.6 241V762M868.5 241V762M899.4 241V762M930.4 241V762M961.3 241V762M992.2 241V762M1023.1 241V762M1054.0 241V762M1085.0 241V762M1115.9 241V762M1146.8 241V762M1177.7 241V762M512 248.0H1185M512 278.9H1185M512 309.8H1185M512 340.6H1185M512 371.5H1185M512 402.4H1185M512 433.3H1185M512 464.2H1185M512 495.0H1185M512 525.9H1185M512 556.8H1185M512 587.7H1185M512 618.6H1185M512 649.4H1185M512 680.3H1185M512 711.2H1185M512 742.1H1185" stroke="#2f2f2f" stroke-width="1" fill="none" clip-path="url(#nc)"/>
<line x1="693.5" y1="386" x2="693.5" y2="448" stroke="#b4b9c0" stroke-width="1.3"/>
<line x1="693.7" y1="469" x2="693.7" y2="537" stroke="#c8c8c4" stroke-width="1.3"/>
</svg>

<div class="abs" style="left:657px;top:364px;width:79px;height:22px;border-radius:5px;background:#f3d33c"></div>
<div class="node" style="left:659px;top:366px;width:75px;height:18px;border-radius:3px"></div>
<div class="flag" style="left:727.2px;top:367.4px;width:5.8px;height:15.6px"></div>
<div class="node" style="left:810px;top:403px;width:77px;height:20px"></div>
<div class="flag" style="left:879px;top:404.8px;width:6.4px;height:16.5px"></div>
<div class="node" style="left:659.3px;top:448px;width:75.7px;height:20px"></div>
<div class="flag" style="left:728.3px;top:450px;width:5.7px;height:16.5px"></div>
<div class="node" style="left:659.2px;top:538px;width:75.8px;height:19.6px"></div>
<div class="flag" style="left:728px;top:539.7px;width:6px;height:16.5px;background:#00b6f2;border-radius:3px"></div>
<svg class="abs" style="left:0;top:0" width="1200" height="775" viewBox="0 0 1200 775">
<defs><g id="ic"><polygon points="0,5 11,5 8,0 3,0" fill="#f2f2f2"/><path d="M5.5 0.5V5M1.5 3H9.5" stroke="#9aa6b4" stroke-width="0.6"/></g></defs>
<use href="#ic" x="680.7" y="372.3"/>
<use href="#ic" x="832.4" y="409.8"/>
<use href="#ic" x="672.8" y="455.8"/>
<use href="#ic" x="673" y="545"/>
<circle cx="692.9" cy="385.2" r="2.3" fill="#a9b4bf"/>
<circle cx="844.8" cy="423.3" r="2.4" fill="#a9b4bf"/>
<circle cx="693.4" cy="448" r="2.4" fill="#a9b4bf"/>
<circle cx="694" cy="468.8" r="2.4" fill="#a9b4bf"/>
<circle cx="693.7" cy="537.4" r="2.4" fill="#a9b4bf"/>
<circle cx="693.7" cy="558.2" r="2.4" fill="#a9b4bf"/>
</svg>
<div class="op" style="left:695px;top:369px">OpID: 1</div>
<div class="nm" style="left:695.5px;top:373px">Grid</div>
<div class="op" style="left:847px;top:406.5px">OpID: 2</div>
<div class="nm" style="left:847px;top:411px">Grid</div>
<div class="op" style="left:687.2px;top:452px">OpID: 3</div>
<div class="nm" style="left:687.2px;top:456px;letter-spacing:-0.4px">Sine Wave</div>
<div class="op" style="left:687.6px;top:541.8px">OpID: 4</div>
<div class="nm" style="left:687.6px;top:545.8px;letter-spacing:-0.25px">Transform</div>
</body></html>
